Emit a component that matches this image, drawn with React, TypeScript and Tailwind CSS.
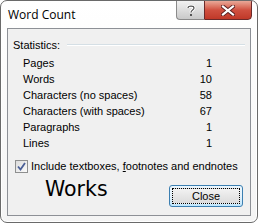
import React from "react";

const rows: [string, number][] = [
    ["Pages", 1],
    ["Words", 10],
    ["Characters (no spaces)", 58],
    ["Characters (with spaces)", 67],
    ["Paragraphs", 1],
    ["Lines", 1],
];

const HelpGlyph = () => (
    <svg width="10" height="13" viewBox="0 0 10 13">
        <path d="M2 4 C2 1.5 8 1.5 8 4 C8 6 5 6 5 8.5" fill="none" stroke="#fff" strokeWidth="3"/>
        <path d="M2 4 C2 1.5 8 1.5 8 4 C8 6 5 6 5 8.5" fill="none" stroke="#555" strokeWidth="1.2"/>
        <rect x="4" y="10" width="2" height="2" fill="#555"/>
    </svg>
);

const CloseGlyph = () => (
    <svg width="14" height="11" viewBox="0 0 14 11">
        <path d="M2 1.5 L12 9.5 M12 1.5 L2 9.5" stroke="#5a2020" strokeWidth="4" strokeLinecap="square"/>
        <path d="M2 1.5 L12 9.5 M12 1.5 L2 9.5" stroke="#fff" strokeWidth="2.2" strokeLinecap="square"/>
    </svg>
);

const CheckBox = () => (
    <div
        className="w-[13px] h-[13px] border border-[#8e8f8f] bg-gradient-to-br from-[#dcdcdc] to-[#fbfbfb] flex items-center justify-center">
        <svg width="9" height="9" viewBox="0 0 9 9">
            <path d="M1 4.5 L3.5 7.5 L8 1" fill="none" stroke="#4a5f97" strokeWidth="1.8"/>
        </svg>
    </div>
);

export default function App() {
    return (
        <div className="w-[258px] h-[223px] bg-white"
             style={{fontFamily: '"Liberation Sans", Arial, sans-serif'}}>
            <div
                className="w-full h-full rounded-[7px] border border-[#6a6a6a] bg-gradient-to-b from-white to-[#f4f4f4] flex flex-col overflow-hidden shadow-[inset_0_0_0_1px_#ffffff]">
                {/* title bar */}
                <div className="h-[27px] flex justify-between items-start">
                    <div className="pl-[7px] pt-[5px] text-[12px] leading-[18px] text-black"
                         style={{fontFamily: '"Open Sans", sans-serif'}}>
                        Word Count
                    </div>
                    <div className="flex mr-[5px] -mt-px">
                        <div
                            className="w-[28px] h-[20px] border border-[#8a8a8a] border-r-0 rounded-bl-[4px] bg-gradient-to-b from-[#f2f2f2] to-[#c9c9c9] flex items-center justify-center">
                            <HelpGlyph/>
                        </div>
                        <div
                            className="w-[48px] h-[20px] border border-[#6b2a2a] rounded-br-[4px] bg-gradient-to-b from-[#e8a898] via-[#d05040] to-[#c03828] flex items-center justify-center">
                            <CloseGlyph/>
                        </div>
                    </div>
                </div>

                {/* client area */}
                <div
                    className="mx-[6px] h-[188px] border border-[#8d9096] bg-[#f0f0f0] flex flex-col text-[11px] text-black">
                    <div className="flex items-center pt-[9px] pl-[5px] pr-[5px] leading-[14px]">
                        <span>Statistics:</span>
                        <div className="flex-1 ml-[7px] h-[2px] border-t border-[#d5dfe5] border-b border-b-white"/>
                    </div>

                    <div className="flex flex-col pt-[3px] pl-[15px] w-[204px]">
                        {rows.map(([label, value]) => (
                            <div key={label} className="flex justify-between leading-[16px]">
                                <span>{label}</span>
                                <span>{value}</span>
                            </div>
                        ))}
                    </div>

                    <div className="flex items-center gap-[3px] pl-[7px] mt-[7px] leading-[16px]">
                        <CheckBox/>
                        <span>Include textboxes, <u>f</u>ootnotes and endnotes</span>
                    </div>

                    <div className="flex items-start justify-between pl-[37px] pr-[7px] mt-[3px]">
                        <span className="text-[20.5px] leading-[24px] text-black"
                              style={{fontFamily: '"DejaVu Sans", sans-serif'}}>
                            Works
                        </span>
                        <button
                            className="mt-[8px] w-[74px] h-[22px] rounded-[3px] border border-[#3c7fb1] bg-gradient-to-b from-[#eaf6fd] via-[#e6f2fb] to-[#bee6fd] p-[2px]">
                            <div
                                className="w-full h-full border border-dotted border-black flex items-center justify-center leading-[14px] bg-gradient-to-b from-[#f2f2f2] to-[#dcdcdc]">
                                Close
                            </div>
                        </button>
                    </div>
                </div>
            </div>
        </div>
    );
}
